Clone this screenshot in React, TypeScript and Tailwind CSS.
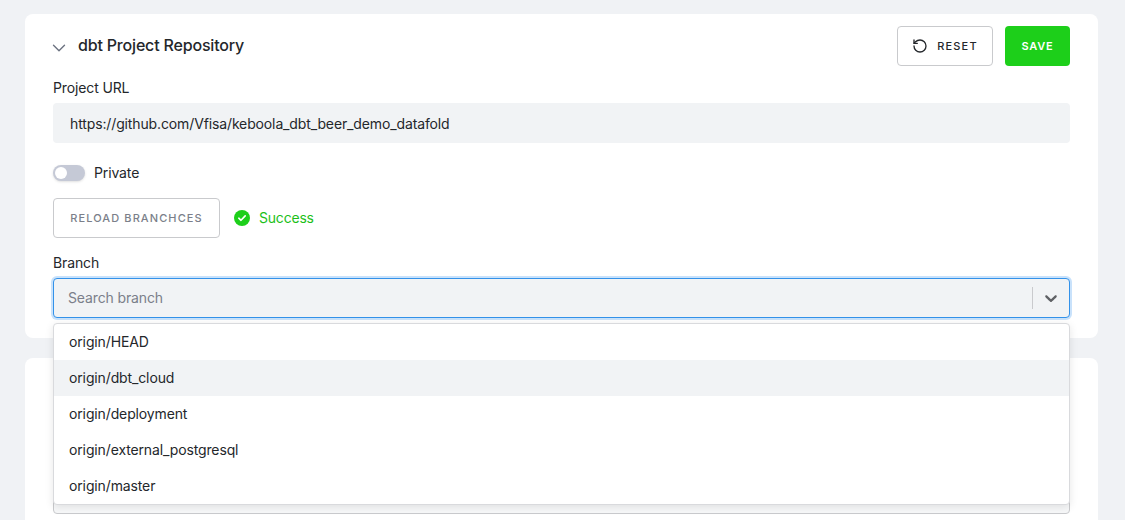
import { ChevronDown, RotateCcw } from 'lucide-react';

const branches = [
  'origin/HEAD',
  'origin/dbt_cloud',
  'origin/deployment',
  'origin/external_postgresql',
  'origin/master',
];

const App = () => {
  return (
    <div className="h-[520px] overflow-hidden bg-[#f0f2f5] pt-[14px] pl-[25px] pr-[27px] font-['Inter',sans-serif] text-sm tracking-[-0.13px] text-[#24272b]">
      <div className="h-[324px] rounded-lg bg-white px-7 pt-3">
        <div className="flex h-10 items-center">
          <ChevronDown className="mt-[3px] -ml-[5px] h-[22px] w-[22px] text-[#6b7280]" strokeWidth={1.5} />
          <h2 className="ml-2 -mt-[2px] text-base font-medium tracking-[-0.18px] text-[#24272b]">dbt Project Repository</h2>
          <button className="ml-auto flex h-10 w-24 items-center justify-center gap-[9px] rounded border border-[#c9cacd] bg-white text-[11px] font-medium tracking-[0.11em] text-[#24272b]">
            <RotateCcw className="h-4 w-4" strokeWidth={2} />
            <span className="pt-px">RESET</span>
          </button>
          <button className="ml-3 h-10 w-[65px] rounded bg-[#1dcf1a] pt-px text-[11px] font-semibold tracking-[0.07em] text-white">
            SAVE
          </button>
        </div>

        <label className="mt-3 block h-[25px] leading-5">Project URL</label>
        <div className="flex h-10 items-center rounded bg-[#f1f3f5] px-[17px] pt-[2px]">https://github.com/Vfisa/keboola_dbt_beer_demo_datafold</div>

        <div className="mt-[22px] flex h-4 items-center gap-[9px]">
          <div className="h-4 w-8 rounded-full bg-[#c5c9d6] p-[2px] shadow-sm">
            <div className="h-3 w-3 rounded-full bg-white" />
          </div>
          <span>Private</span>
        </div>

        <div className="mt-[17px] flex items-center gap-[14px]">
          <button className="h-10 w-[167px] rounded-sm border border-[#c9cacd] bg-white pt-px text-[11px] font-medium tracking-[0.1em] text-[#7b7f8a]">
            RELOAD BRANCHCES
          </button>
          <div className="flex items-center gap-[9px] tracking-[-0.2px] text-[#1dbf1a]">
            <svg viewBox="0 0 16 16" className="h-4 w-4">
              <circle cx="8" cy="8" r="8" fill="#1dcf1a" />
              <path d="M4.8 8.2l2.2 2.1 4.2-4.4" fill="none" stroke="#fff" strokeWidth="1.6" strokeLinecap="round" strokeLinejoin="round" />
            </svg>
            <span>Success</span>
          </div>
        </div>

        <label className="mt-[15px] block h-[25px] leading-5">Branch</label>
        <div className="relative">
          <div className="flex h-10 items-center rounded border border-[#3392ea] bg-[#f1f3f5] pl-[14px] shadow-[0_0_0_2px_#c9e2fb]">
            <span className="flex-1 text-[#7b7f8a]">Search branch</span>
            <div className="h-[22px] w-px bg-[#c9cacd]" />
            <div className="flex w-[36px] justify-center">
              <svg viewBox="0 0 20 20" className="h-5 w-5 fill-[#5f6165]">
                <path d="M4.516 7.548c0.436-0.446 1.043-0.481 1.576 0l3.908 3.747 3.908-3.747c0.533-0.481 1.141-0.446 1.574 0 0.436 0.445 0.408 1.197 0 1.615-0.406 0.418-4.695 4.502-4.695 4.502-0.217 0.223-0.502 0.335-0.787 0.335s-0.57-0.112-0.789-0.335c0 0-4.287-4.084-4.695-4.502s-0.436-1.17 0-1.615z" />
              </svg>
            </div>
          </div>
          <ul className="absolute top-[45px] right-0 left-0 z-10 rounded border border-[#d9dadd] bg-white shadow-[0_2px_8px_rgba(0,0,0,0.1)]">
            {branches.map((branch) => (
              <li
                key={branch}
                className={`flex h-9 items-center px-[15px] ${branch === 'origin/dbt_cloud' ? 'bg-[#f1f3f5]' : ''}`}
              >
                {branch}
              </li>
            ))}
          </ul>
        </div>
      </div>

      <div className="mt-5 h-[200px] rounded-lg bg-white px-7 pt-[116px]">
        <div className="h-10 rounded border border-[#c9cacd] bg-[#f7f8f9]" />
      </div>
    </div>
  );
};

export default App;
